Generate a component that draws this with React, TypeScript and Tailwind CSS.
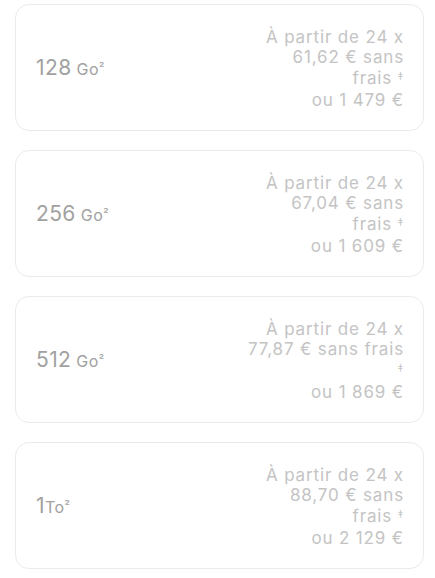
type Plan = { size: string; unit: string; lines: string[] };

const plans: Plan[] = [
  { size: "128", unit: "Go", lines: ["À partir de 24 x", "61,62 € sans", "frais ‡", "ou 1 479 €"] },
  { size: "256", unit: "Go", lines: ["À partir de 24 x", "67,04 € sans", "frais ‡", "ou 1 609 €"] },
  { size: "512", unit: "Go", lines: ["À partir de 24 x", "77,87 € sans frais", "‡", "ou 1 869 €"] },
  { size: "1", unit: "To", lines: ["À partir de 24 x", "88,70 € sans", "frais ‡", "ou 2 129 €"] },
];

function PlanCard({ plan }: { plan: Plan }) {
  const tight = plan.unit === "To";
  return (
    <div className="flex items-center justify-between h-[127px] rounded-[14px] border border-[#ebebeb] bg-white pl-[20px] pr-[19px]">
      <div className="flex items-baseline text-[#a1a1a1]">
        <span className="text-[21px] font-normal tracking-[0.4px]">{plan.size}</span>
        <span className={`text-[16px] tracking-[0.4px] ${tight ? "ml-0" : "ml-[5px]"}`}>
          {plan.unit}
          <span className="text-[12px] relative -top-[3px]">²</span>
        </span>
      </div>
      <div className="flex flex-col items-end pt-[2px] text-right text-[17px] leading-[20.5px] tracking-[0.85px] font-normal text-[#c4c4c4]">
        {plan.lines.map((l, i) =>
          l.endsWith("‡") ? (
            <span key={i}>
              {l.slice(0, -1)}
              <span className="text-[11px] relative -top-[4px]">‡</span>
            </span>
          ) : (
            <span key={i}>{l}</span>
          )
        )}
      </div>
    </div>
  );
}

export default function App() {
  return (
    <div className="w-[435px] min-h-[578px] bg-white pt-[4px] pl-[15px] pr-[11px]" style={{ fontFamily: "Inter, sans-serif" }}>
      <div className="flex flex-col gap-[19px]">
        {plans.map((p) => (
          <PlanCard key={p.size} plan={p} />
        ))}
      </div>
    </div>
  );
}
